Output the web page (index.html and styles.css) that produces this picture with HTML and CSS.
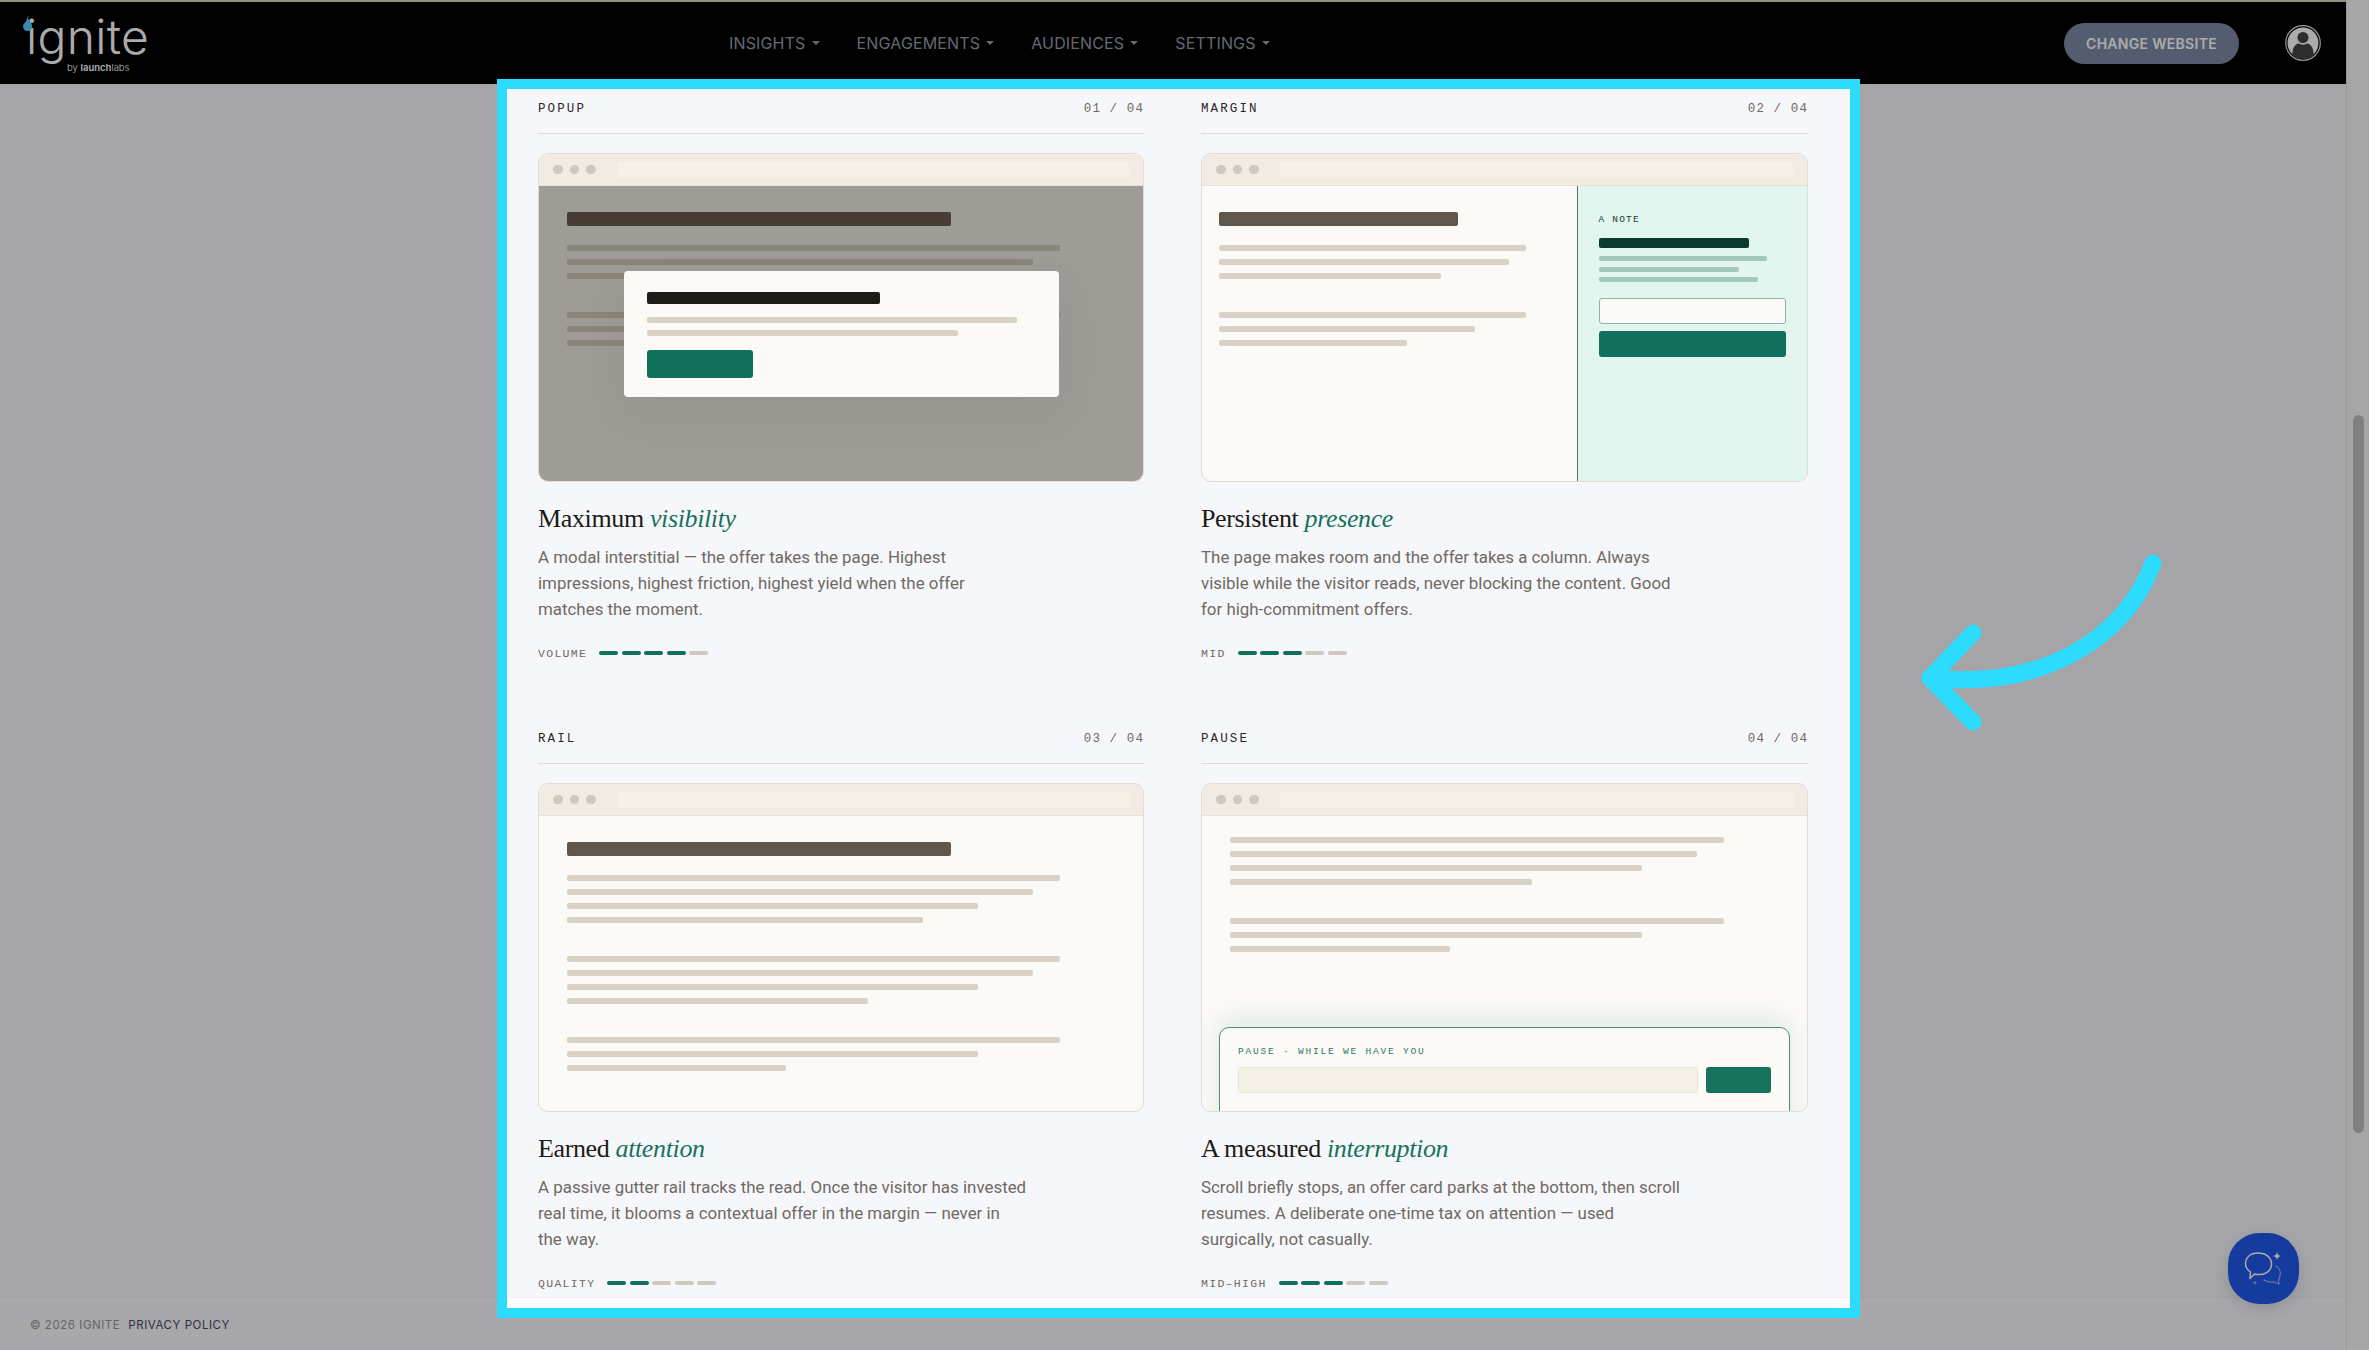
FILE: index.html
```html
<!DOCTYPE html>
<html lang="en">
<head>
  <meta charset="UTF-8" />
  <title>Ignite - Formats</title>
  <link rel="stylesheet" href="styles.css">
</head>
<body>

  <div class="window">
    <div class="page">
      <div class="topstrip"></div>

      <!-- Navbar -->
      <header class="navbar">
        <div class="logo">
          <span class="logo-word">ignite</span>
          <span class="logo-by">by <b>launch</b>labs</span>
          <svg class="logo-flame" viewBox="0 0 9 16" width="9" height="16"><path d="M5 0c.6 2 .3 3 0 4 1.800 1.500 4 4 4 7 0 3-2 5-4.500 5S0 14 0 11.500C0 9 1.500 8.500 2.500 7 3.500 5.500 4.500 3 5 0z"/></svg>
        </div>
        <nav class="menu">
          <a href="#">INSIGHTS<i class="caret"></i></a>
          <a href="#">ENGAGEMENTS<i class="caret"></i></a>
          <a href="#">AUDIENCES<i class="caret"></i></a>
          <a href="#">SETTINGS<i class="caret"></i></a>
        </nav>
        <button class="change-btn">CHANGE WEBSITE</button>
        <svg class="avatar" viewBox="0 0 36 36" width="36" height="36">
          <circle cx="18" cy="18" r="17.300" fill="#000" stroke="#e4e4e4" stroke-width="1.200"/>
          <circle cx="18" cy="18" r="15.500" fill="#fff"/>
          <circle cx="18" cy="12.500" r="5.500" fill="#444"/>
          <path d="M7.500 30.500c-.5-8 3-11.500 6-12 2.500 1.500 6.500 1.500 9 0 3 .5 6.500 4 6 12-3 2.500-7 4-10.500 4s-7.500-1.500-10.500-4z" fill="#444"/>
        </svg>
      </header>

      <main class="content">
        <div class="formats">

          <!-- Popup -->
          <section class="format">
            <div class="format-head">
              <span class="format-name">POPUP</span>
              <span class="format-count">01 / 04</span>
            </div>
            <div class="preview">
              <div class="toolbar"><i></i><i></i><i></i><span class="url"></span></div>
              <div class="pv-body pv-article">
                <div class="bar-title w70"></div>
                <div class="para">
                  <div class="ln w90"></div>
                  <div class="ln w85"></div>
                  <div class="ln w75"></div>
                </div>
                <div class="para">
                  <div class="ln w90"></div>
                  <div class="ln w75"></div>
                  <div class="ln w55"></div>
                </div>
                <div class="scrim"></div>
                <div class="modal">
                  <div class="modal-title"></div>
                  <div class="ln modal-ln w95"></div>
                  <div class="ln modal-ln w80"></div>
                  <div class="modal-btn"></div>
                </div>
              </div>
            </div>
            <h2 class="format-title">Maximum <em>visibility</em></h2>
            <p class="format-desc">A modal interstitial — the offer takes the page. Highest impressions, highest friction, highest yield when the offer matches the moment.</p>
            <div class="meter">
              <span>VOLUME</span>
              <div class="pips"><i class="on"></i><i class="on"></i><i class="on"></i><i class="on"></i><i></i></div>
            </div>
          </section>

          <!-- Margin -->
          <section class="format">
            <div class="format-head">
              <span class="format-name">MARGIN</span>
              <span class="format-count">02 / 04</span>
            </div>
            <div class="preview">
              <div class="toolbar"><i></i><i></i><i></i><span class="url"></span></div>
              <div class="pv-body pv-split">
                <div class="split-main">
                  <div class="bar-title w70"></div>
                  <div class="para">
                    <div class="ln w90"></div>
                    <div class="ln w85"></div>
                    <div class="ln w65"></div>
                  </div>
                  <div class="para">
                    <div class="ln w90"></div>
                    <div class="ln w75"></div>
                    <div class="ln w55"></div>
                  </div>
                </div>
                <div class="split-side">
                  <div class="side-label">A NOTE</div>
                  <div class="side-title"></div>
                  <div class="side-ln w90"></div>
                  <div class="side-ln w75"></div>
                  <div class="side-ln w85"></div>
                  <div class="side-input"></div>
                  <div class="side-btn"></div>
                </div>
              </div>
            </div>
            <h2 class="format-title">Persistent <em>presence</em></h2>
            <p class="format-desc">The page makes room and the offer takes a column. Always visible while the visitor reads, never blocking the content. Good for high-commitment offers.</p>
            <div class="meter">
              <span>MID</span>
              <div class="pips"><i class="on"></i><i class="on"></i><i class="on"></i><i></i><i></i></div>
            </div>
          </section>

          <!-- Rail -->
          <section class="format">
            <div class="format-head">
              <span class="format-name">RAIL</span>
              <span class="format-count">03 / 04</span>
            </div>
            <div class="preview">
              <div class="toolbar"><i></i><i></i><i></i><span class="url"></span></div>
              <div class="pv-body pv-article">
                <div class="bar-title w70"></div>
                <div class="para">
                  <div class="ln w90"></div>
                  <div class="ln w85"></div>
                  <div class="ln w75"></div>
                  <div class="ln w65"></div>
                </div>
                <div class="para">
                  <div class="ln w90"></div>
                  <div class="ln w85"></div>
                  <div class="ln w75"></div>
                  <div class="ln w55"></div>
                </div>
                <div class="para">
                  <div class="ln w90"></div>
                  <div class="ln w75"></div>
                  <div class="ln w40"></div>
                </div>
              </div>
            </div>
            <h2 class="format-title">Earned <em>attention</em></h2>
            <p class="format-desc">A passive gutter rail tracks the read. Once the visitor has invested real time, it blooms a contextual offer in the margin — never in the way.</p>
            <div class="meter">
              <span>QUALITY</span>
              <div class="pips"><i class="on"></i><i class="on"></i><i></i><i></i><i></i></div>
            </div>
          </section>

          <!-- Pause -->
          <section class="format">
            <div class="format-head">
              <span class="format-name">PAUSE</span>
              <span class="format-count">04 / 04</span>
            </div>
            <div class="preview">
              <div class="toolbar"><i></i><i></i><i></i><span class="url"></span></div>
              <div class="pv-body pv-article pv-pause">
                <div class="para">
                  <div class="ln w90"></div>
                  <div class="ln w85"></div>
                  <div class="ln w75"></div>
                  <div class="ln w55"></div>
                </div>
                <div class="para">
                  <div class="ln w90"></div>
                  <div class="ln w75"></div>
                  <div class="ln w40"></div>
                </div>
                <div class="pause-card">
                  <div class="pause-label">PAUSE · WHILE WE HAVE YOU</div>
                  <div class="pause-row">
                    <div class="pause-input"></div>
                    <div class="pause-btn"></div>
                  </div>
                </div>
              </div>
            </div>
            <h2 class="format-title">A measured <em>interruption</em></h2>
            <p class="format-desc">Scroll briefly stops, an offer card parks at the bottom, then scroll resumes. A deliberate one-time tax on attention — used surgically, not casually.</p>
            <div class="meter">
              <span>MID–HIGH</span>
              <div class="pips"><i class="on"></i><i class="on"></i><i class="on"></i><i></i><i></i></div>
            </div>
          </section>

        </div>
      </main>

      <footer class="footer">
        <span>© 2026 IGNITE</span>
        <a href="#">PRIVACY POLICY</a>
      </footer>
    </div>

    <div class="scrollbar"><div class="thumb"></div></div>
  </div>

  <!-- Chat bubble -->
  <button class="chat-btn">
    <svg viewBox="0 0 71 71" width="71" height="71" fill="none" stroke="#fff" stroke-linecap="round" stroke-linejoin="round">
      <path d="M47 33c4 1 6 5 5 10-.5 2-1 3-1.500 4l.5 4-5-2c-3 .5-7 0-10-2" stroke-width="1.200" opacity=".55"/>
      <path d="M30 20c8 0 13.500 4.500 13.500 11S38 42 30 41.500c-1.500 0-2.500 0-3.500-.5L22 45.500l.5-6.500c-3-2-5-5-5-8.500C17.500 24.500 22.500 20 30 20z" stroke-width="1.500"/>
      <path d="M49 19c.5 2.500 1.500 3.500 4 4-2.500.5-3.500 1.500-4 4-.5-2.500-1.500-3.500-4-4 2.500-.5 3.500-1.500 4-4z" fill="#fff" stroke="none"/>
      <path d="M27 47.500c.3 1.500.8 2 2.300 2.300-1.500.3-2 .8-2.300 2.300-.3-1.500-.8-2-2.300-2.300 1.500-.3 2-.8 2.300-2.300z" fill="#fff" stroke="none" opacity=".6"/>
    </svg>
  </button>

  <!-- Annotation over the screenshot -->
  <div class="highlight"></div>
  <svg class="arrow" viewBox="1910 550 260 190" width="260" height="190" fill="none" stroke="#2ddbff" stroke-width="17" stroke-linecap="round" stroke-linejoin="round">
    <path d="M2153 563C2125 640 2040 690 1930 678"/>
    <path d="M1973 633L1930 678L1973 722"/>
  </svg>

</body>
</html>
```

FILE: styles.css
```css
* {
  box-sizing: border-box;
}

html, body {
  margin: 0;
  height: 100%;
  overflow: hidden;
}

body {
  position: relative;
  font-family: "Inter", "Liberation Sans", sans-serif;
  background: #f6f7fb;
}

.window {
  display: flex;
  height: 1350px;
}

.page {
  flex: 1;
  display: flex;
  flex-direction: column;
  min-width: 0;
}

.topstrip {
  height: 2px;
  background: #d4d4c2;
}

/* Navbar */
.navbar {
  height: 82px;
  flex-shrink: 0;
  background: #000;
  display: flex;
  align-items: center;
  padding: 0 25px 0 26px;
  position: relative;
}

.logo {
  position: relative;
  width: 122px;
  height: 58px;
  margin-top: 2px;
  display: flex;
  flex-direction: column;
  color: #fff;
}

.logo-flame {
  position: absolute;
  left: -3px;
  top: 0;
  fill: #59d1ff;
}

.logo-word {
  font-size: 48px;
  font-weight: 300;
  line-height: 50px;
  margin-top: -3px;
  letter-spacing: 0.3px;
}

.logo-by {
  position: absolute;
  left: 41px;
  top: 47px;
  font-size: 9.500px;
  font-weight: 300;
  white-space: nowrap;
}

.logo-by b {
  font-weight: 600;
}

.menu {
  display: flex;
  gap: 37px;
  margin-left: 581px;
}

.menu a {
  display: flex;
  align-items: center;
  gap: 6px;
  color: #979dab;
  text-decoration: none;
  font-size: 16px;
  letter-spacing: 0.15px;
}

.caret {
  width: 0;
  height: 0;
  border-left: 4px solid transparent;
  border-right: 4px solid transparent;
  border-top: 4px solid #979dab;
}

.change-btn {
  margin-left: auto;
  width: 175px;
  height: 41px;
  border: none;
  border-radius: 21px;
  background: #7e8aa8;
  color: #fff;
  font-family: inherit;
  font-size: 14px;
  font-weight: 600;
  letter-spacing: 0.3px;
}

.avatar {
  margin-left: 46px;
}

/* Main */
.content {
  flex: 1;
  overflow: hidden;
  padding-top: 16px;
  background: #f6f7fb;
}

.formats {
  width: 1270px;
  margin: 0 auto;
  display: grid;
  grid-template-columns: 606px 607px;
  column-gap: 57px;
  row-gap: 70px;
}

.format-head {
  display: flex;
  justify-content: space-between;
  align-items: center;
  height: 34px;
  padding: 1px 0 16px;
  border-bottom: 1px solid #dfdad3;
  margin-bottom: 19px;
  font-family: "Liberation Mono", monospace;
}

.format-name {
  font-size: 12.500px;
  letter-spacing: 2.100px;
  color: #2a2724;
}

.format-count {
  font-size: 12.500px;
  letter-spacing: 1.100px;
  color: #6f6a63;
}

/* Browser mock */
.preview {
  height: 329px;
  border: 1px solid #e0dbd3;
  border-radius: 10px;
  overflow: hidden;
  background: #fcfaf6;
  display: flex;
  flex-direction: column;
}

.toolbar {
  height: 32px;
  flex-shrink: 0;
  background: #f1ebe3;
  border-bottom: 1px solid #e8e1d7;
  display: flex;
  align-items: center;
  padding: 0 14px;
}

.toolbar i {
  width: 9.500px;
  height: 9.500px;
  border-radius: 50%;
  background: #cfc8bc;
  margin-right: 7px;
}

.url {
  flex: 1;
  height: 16px;
  margin-left: 14px;
  background: #f6f1e7;
  border-radius: 3px;
}

.pv-body {
  flex: 1;
  position: relative;
  min-height: 0;
}

.pv-article {
  padding: 26px 28px;
}

.pv-pause {
  padding-top: 21px;
}

.bar-title {
  height: 14px;
  border-radius: 2px;
  background: #5f564e;
  margin-bottom: 19px;
}

.para {
  margin-bottom: 33px;
}

.ln {
  height: 6px;
  border-radius: 2px;
  background: #d9d1c5;
  margin-bottom: 8px;
}

.w95 { width: 95%; }
.w90 { width: 90%; }
.w85 { width: 85%; }
.w80 { width: 80%; }
.w75 { width: 75%; }
.w70 { width: 70%; }
.w65 { width: 65%; }
.w55 { width: 55%; }
.w40 { width: 40%; }

/* Popup */
.scrim {
  position: absolute;
  inset: 0;
  background: rgba(37, 30, 24, 0.43);
}

.modal {
  position: absolute;
  left: 85px;
  top: 85px;
  width: 435px;
  height: 126px;
  padding: 21px 23px;
  background: #fcfaf6;
  border-radius: 4px;
  box-shadow: 0 16px 50px rgba(0, 0, 0, 0.06);
}

.modal-title {
  width: 60%;
  height: 11.500px;
  border-radius: 2px;
  background: #1f1c17;
  margin-bottom: 13px;
}

.modal-ln {
  margin-bottom: 7px;
}

.modal-btn {
  width: 106px;
  height: 28px;
  margin-top: 14px;
  border-radius: 3px;
  background: #11705a;
}

/* Margin */
.pv-split {
  display: grid;
  grid-template-columns: 375px 1fr;
}

.split-main {
  padding: 26px 17px;
}

.split-side {
  padding: 27px 21px 0 20.500px;
  background: #e2f5ee;
  border-left: 1.500px solid #3f7f6c;
}

.side-label {
  font-family: "Liberation Mono", monospace;
  font-size: 9.500px;
  line-height: 14px;
  letter-spacing: 1.200px;
  color: #123f33;
  margin-bottom: 11px;
}

.side-title {
  width: 80%;
  height: 10px;
  border-radius: 2px;
  background: #0b3a2e;
  margin-bottom: 8px;
}

.side-ln {
  height: 5px;
  border-radius: 2px;
  background: #a2c8b9;
  margin-bottom: 5.500px;
}

.side-input {
  height: 26px;
  margin-top: 16px;
  background: #fcfaf6;
  border: 1.500px solid #8ab5a5;
  border-radius: 3px;
}

.side-btn {
  height: 26px;
  margin-top: 7px;
  background: #11705a;
  border-radius: 3px;
}

/* Pause */
.pause-card {
  position: absolute;
  left: 17px;
  right: 17px;
  top: 211px;
  height: 120px;
  padding: 17.500px 18px;
  background: #fcfaf6;
  border: 1.500px solid #4d9078;
  border-radius: 10px;
  box-shadow: 0 -8px 24px rgba(16, 112, 90, 0.12);
}

.pause-label {
  font-family: "Liberation Mono", monospace;
  font-size: 9.500px;
  line-height: 12px;
  letter-spacing: 1.800px;
  color: #2b7a64;
  margin-bottom: 9.500px;
}

.pause-row {
  display: flex;
  gap: 8px;
  height: 26px;
}

.pause-input {
  flex: 1;
  background: #f6f1e7;
  border: 1px solid #ece5d8;
  border-radius: 3px;
}

.pause-btn {
  width: 65px;
  background: #17725b;
  border-radius: 3px;
}

/* Text under the mock */
.format-title {
  margin: 22px 0 0;
  font-family: "Liberation Serif", serif;
  font-size: 26px;
  font-weight: 400;
  line-height: 30px;
  letter-spacing: -0.370px;
  color: #1c1a17;
}

.format-title em {
  color: #17725b;
}

.format-desc {
  margin: 10px 0 0;
  max-width: 489px;
  font-family: "Roboto", sans-serif;
  font-size: 16.900px;
  line-height: 26px;
  color: #6f6a63;
}

.meter {
  display: flex;
  align-items: center;
  gap: 12px;
  height: 14px;
  margin-top: 24px;
  font-family: "Liberation Mono", monospace;
  font-size: 11.500px;
  letter-spacing: 1.300px;
  color: #6f6a63;
}

.pips {
  display: flex;
  gap: 3.500px;
}

.pips i {
  width: 19px;
  height: 4.500px;
  border-radius: 3px;
  background: #cfc9c0;
}

.pips i.on {
  background: #11705a;
}

/* Footer */
.footer {
  height: 53px;
  flex-shrink: 0;
  display: flex;
  align-items: center;
  gap: 8px;
  padding: 2px 0 0 30px;
  background: #fbfbfe;
  border-top: 1px solid #eeeef3;
  font-size: 11.500px;
  letter-spacing: 0.550px;
  color: #92959d;
}

.footer a {
  color: #44495e;
  text-decoration: none;
}

/* Scrollbar */
.scrollbar {
  width: 23px;
  padding: 415px 5px 0 6px;
  background: #f8f8f8;
  border-left: 1px solid #e5e5e5;
}

.thumb {
  height: 718px;
  border-radius: 6px;
  background: #bfbfbf;
}

/* Floating bits */
.chat-btn {
  position: absolute;
  left: 2228px;
  top: 1233px;
  width: 71px;
  height: 71px;
  padding: 0;
  border: none;
  border-radius: 44%;
  background: #2258ed;
  box-shadow: 0 6px 16px rgba(0, 0, 0, 0.12);
}

.chat-btn svg {
  display: block;
}

.highlight {
  position: absolute;
  left: 497px;
  top: 79px;
  width: 1363px;
  height: 1239px;
  border: 10px solid #2ddbff;
  box-shadow: 0 0 0 3000px rgba(0, 0, 0, 0.33);
}

.arrow {
  position: absolute;
  left: 1910px;
  top: 550px;
}
```
